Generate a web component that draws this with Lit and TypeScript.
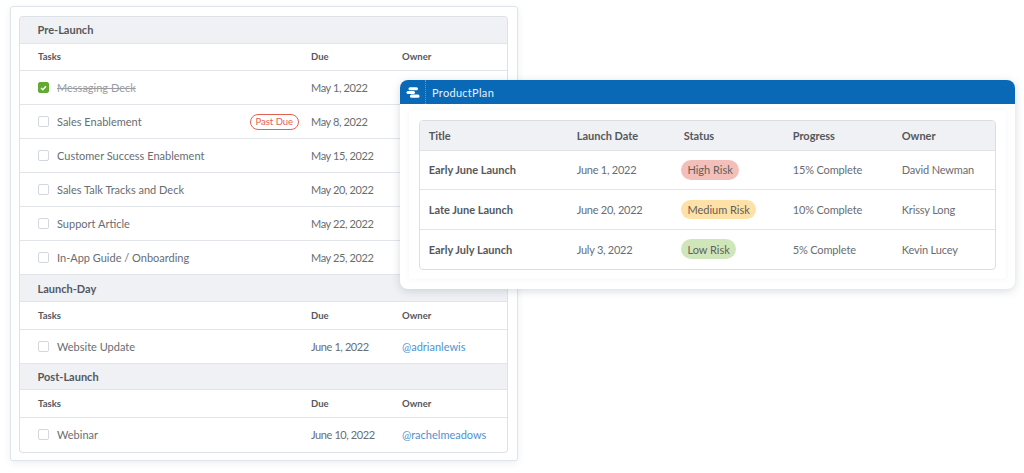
import { LitElement, html, css } from "lit";
import { customElement } from "lit/decorators.js";

type Task = { name: string; due: string; owner?: string; done?: boolean; past?: boolean };
type Section = { title: string; tasks: Task[] };

const sections: Section[] = [
  {
    title: "Pre-Launch",
    tasks: [
      { name: "Messaging Deck", due: "May 1, 2022", done: true },
      { name: "Sales Enablement", due: "May 8, 2022", past: true },
      { name: "Customer Success Enablement", due: "May 15, 2022" },
      { name: "Sales Talk Tracks and Deck", due: "May 20, 2022" },
      { name: "Support Article", due: "May 22, 2022" },
      { name: "In-App Guide / Onboarding", due: "May 25, 2022" },
    ],
  },
  { title: "Launch-Day", tasks: [{ name: "Website Update", due: "June 1, 2022", owner: "@adrianlewis" }] },
  { title: "Post-Launch", tasks: [{ name: "Webinar", due: "June 10, 2022", owner: "@rachelmeadows" }] },
];

const launches = [
  { title: "Early June Launch", date: "June 1, 2022", status: "High Risk", cls: "high", progress: "15% Complete", owner: "David Newman" },
  { title: "Late June Launch", date: "June 20, 2022", status: "Medium Risk", cls: "medium", progress: "10% Complete", owner: "Krissy Long" },
  { title: "Early July Launch", date: "July 3, 2022", status: "Low Risk", cls: "low", progress: "5% Complete", owner: "Kevin Lucey" },
];

@customElement("app-root")
export class AppRoot extends LitElement {
  static styles = css`
    :host {
      display: block;
      position: relative;
      width: 1024px;
      height: 473px;
      overflow: hidden;
      background: #fff;
      font-family: "Lato", "Noto Sans", sans-serif;
      color: #55595e;
      font-size: 11px;
    }
    .outer {
      box-sizing: border-box;
      width: 508px;
      height: 454.5px;
      margin: 6px 0 0 9.5px;
      padding: 10px 10px 9px 9.5px;
      background: #fff;
      border: 1px solid #dfe4ea;
      border-radius: 3px;
      box-shadow: 0 2px 6px rgba(120, 135, 155, 0.14);
    }
    .tasks {
      box-shadow: 0 0 0 1px #dde2e8;
      border-radius: 3px;
      overflow: hidden;
    }
    .sec {
      box-sizing: border-box;
      height: 26.7px;
      display: flex;
      align-items: center;
      padding-left: 17.5px;
      background: #eff1f4;
      font-size: 11px;
      font-weight: 700;
      color: #54585d;
      border-bottom: 1px solid #e1e5ea;
    }
    .row {
      box-sizing: border-box;
      display: grid;
      grid-template-columns: 273px 91px 1fr;
      align-items: center;
      border-bottom: 1px solid #e1e5ea;
      padding-left: 18px;
    }
    .head {
      height: 27.6px;
      font-size: 9.5px;
      font-weight: 700;
      color: #54585d;
    }
    .task {
      height: 34px;
      font-size: 11px;
      color: #696d72;
    }
    .tasks > .task:last-child {
      border-bottom: none;
    }
    .name {
      display: flex;
      align-items: center;
      min-width: 0;
    }
    .due {
      letter-spacing: -0.4px;
    }
    .box {
      box-sizing: border-box;
      flex: none;
      width: 11px;
      height: 11px;
      margin-right: 8px;
      border: 1px solid #d3d8de;
      border-radius: 2px;
      background: #fff;
    }
    .box.on {
      background: #62ab33;
      border-color: #62ab33;
      display: flex;
      align-items: center;
      justify-content: center;
    }
    .box svg {
      display: block;
    }
    .struck {
      text-decoration: line-through;
      color: #9a9ea3;
    }
    .past {
      margin-left: auto;
      margin-right: 12px;
      box-sizing: border-box;
      height: 15.5px;
      width: 49.5px;
      display: flex;
      align-items: center;
      justify-content: center;
      border: 1px solid #e5604f;
      border-radius: 8px;
      font-size: 9.5px;
      color: #e5604f;
      white-space: nowrap;
    }
    .link {
      color: #4f92d1;
    }

    .plan {
      position: absolute;
      left: 400px;
      top: 80px;
      width: 615px;
      height: 208.5px;
      box-sizing: border-box;
      background: #fff;
      border-radius: 8px;
      box-shadow: 0 2px 9px rgba(110, 125, 145, 0.28);
      overflow: hidden;
    }
    .bar {
      height: 24px;
      display: flex;
      align-items: center;
      background: #0a69b7;
      color: #e8f1f9;
      font-size: 11px;
      letter-spacing: 0.3px;
    }
    .logo {
      box-sizing: border-box;
      width: 26px;
      height: 24px;
      display: flex;
      align-items: center;
      justify-content: center;
      border-right: 1px dotted #5c9bd0;
      margin-right: 6px;
    }
    .inner {
      margin: 6px 9px 0 9px;
      padding: 10px;
      height: 149px;
      border-radius: 4px;
      box-shadow: 0 0 5px rgba(130, 145, 165, 0.1);
    }
    .grid {
      border: 1px solid #dadfe5;
      border-radius: 4px;
      overflow: hidden;
    }
    .lrow {
      box-sizing: border-box;
      display: grid;
      grid-template-columns: 148px 107px 109px 109px 1fr;
      align-items: center;
      padding-left: 8.7px;
      height: 39.5px;
      border-bottom: 1px solid #e1e5ea;
      font-size: 11px;
      color: #696d72;
    }
    .lrow:last-child {
      border-bottom: none;
      height: 39px;
    }
    .lrow.lhead {
      height: 29.5px;
      background: #eff1f4;
      font-weight: 700;
      color: #54585d;
    }
    .t {
      font-weight: 700;
      color: #54585d;
    }
    .date {
      letter-spacing: -0.25px;
    }
    .who {
      letter-spacing: -0.15px;
    }
    .pill {
      display: inline-flex;
      align-items: center;
      height: 19.5px;
      padding: 0 6px;
      margin-left: -2.3px;
      border-radius: 10px;
      color: #625e5a;
    }
    .high { background: #f3bfba; }
    .medium { background: #fde1a6; }
    .low { background: #cfe6ba; }
  `;

  render() {
    return html`
      <div class="outer">
        <div class="tasks">
          ${sections.map(
            (s) => html`
              <div class="sec">${s.title}</div>
              <div class="row head"><span>Tasks</span><span>Due</span><span>Owner</span></div>
              ${s.tasks.map(
                (t) => html`
                  <div class="row task">
                    <div class="name">
                      <span class="box ${t.done ? "on" : ""}">
                        ${t.done
                          ? html`<svg width="7" height="6" viewBox="0 0 7 6"><path d="M1 3l1.8 1.8L6 1.2" fill="none" stroke="#fff" stroke-width="1.4"/></svg>`
                          : ""}
                      </span>
                      <span class=${t.done ? "struck" : ""}>${t.name}</span>
                      ${t.past ? html`<span class="past">Past Due</span>` : ""}
                    </div>
                    <span class="due">${t.due}</span>
                    <span class="link">${t.owner ?? ""}</span>
                  </div>
                `
              )}
            `
          )}
        </div>
      </div>

      <div class="plan">
        <div class="bar">
          <div class="logo">
            <svg width="14" height="11" viewBox="0 0 14 11">
              <rect x="2.5" y="0.2" width="9.5" height="3" rx="1.5" fill="#fff" />
              <rect x="0.5" y="3.9" width="8.5" height="3.1" rx="1.5" fill="#fff" />
              <rect x="4" y="7.6" width="9.5" height="3.1" rx="1.5" fill="#fff" />
            </svg>
          </div>
          <span>ProductPlan</span>
        </div>
        <div class="inner">
          <div class="grid">
            <div class="lrow lhead">
              <span>Title</span><span>Launch Date</span><span>Status</span><span>Progress</span><span>Owner</span>
            </div>
            ${launches.map(
              (l) => html`
                <div class="lrow">
                  <span class="t">${l.title}</span>
                  <span class="date">${l.date}</span>
                  <span><span class="pill ${l.cls}">${l.status}</span></span>
                  <span class="who">${l.progress}</span>
                  <span class="who">${l.owner}</span>
                </div>
              `
            )}
          </div>
        </div>
      </div>
    `;
  }
}
